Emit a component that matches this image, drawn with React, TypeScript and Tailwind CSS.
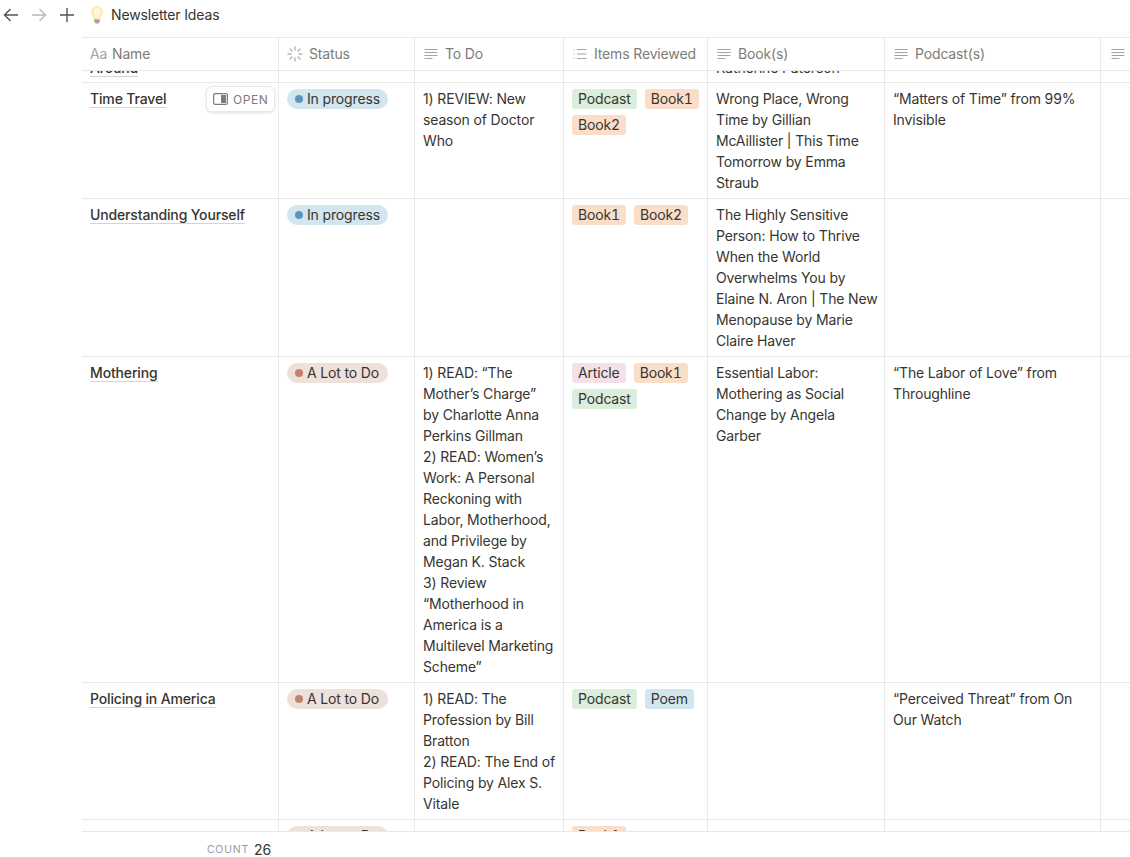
import type { ReactNode } from 'react';

type TagName = 'Podcast' | 'Book1' | 'Book2' | 'Article' | 'Poem';
type Status = 'In progress' | 'A Lot to Do';

type RowData = {
  name: string;
  status: Status;
  todo: string[];
  tags: TagName[];
  books: string;
  podcasts: string;
  hovered?: boolean;
};

const tagColors: Record<TagName, string> = {
  Podcast: 'bg-[#dbeddb]',
  Book1: 'bg-[#fadec9]',
  Book2: 'bg-[#fadec9]',
  Article: 'bg-[#f5e0e9]',
  Poem: 'bg-[#d3e5ef]',
};

const rows: RowData[] = [
  {
    name: 'Time Travel',
    status: 'In progress',
    todo: ['1) REVIEW: New season of Doctor Who'],
    tags: ['Podcast', 'Book1', 'Book2'],
    books:
      'Wrong Place, Wrong Time by Gillian McAillister | This Time Tomorrow by Emma Straub',
    podcasts: '“Matters of Time” from 99% Invisible',
    hovered: true,
  },
  {
    name: 'Understanding Yourself',
    status: 'In progress',
    todo: [],
    tags: ['Book1', 'Book2'],
    books:
      'The Highly Sensitive Person: How to Thrive When the World Overwhelms You by Elaine N. Aron | The New Menopause by Marie Claire Haver',
    podcasts: '',
  },
  {
    name: 'Mothering',
    status: 'A Lot to Do',
    todo: [
      '1) READ: “The Mother’s Charge” by Charlotte Anna Perkins Gillman',
      '2) READ: Women’s Work: A Personal Reckoning with Labor, Motherhood, and Privilege by Megan K. Stack',
      '3) Review “Motherhood in America is a Multilevel Marketing Scheme”',
    ],
    tags: ['Article', 'Book1', 'Podcast'],
    books: 'Essential Labor: Mothering as Social Change by Angela Garber',
    podcasts: '“The Labor of Love” from Throughline',
  },
  {
    name: 'Policing in America',
    status: 'A Lot to Do',
    todo: [
      '1) READ: The Profession by Bill Bratton',
      '2) READ: The End of Policing by Alex S. Vitale',
    ],
    tags: ['Podcast', 'Poem'],
    books: '',
    podcasts: '“Perceived Threat” from On Our Watch',
  },
];

function TextIcon() {
  return (
    <svg width="16" height="16" viewBox="0 0 16 16" fill="none" stroke="#a5a4a1" strokeWidth="1.1" className="shrink-0">
      <path d="M1.5 3.5h13M1.5 6.5h13M1.5 9.5h13M1.5 12.5h8" />
    </svg>
  );
}

function ListIcon() {
  return (
    <svg width="16" height="16" viewBox="0 0 16 16" fill="none" stroke="#a5a4a1" strokeWidth="1.1" className="shrink-0">
      <path d="M1.5 3.5h1M1.5 8h1M1.5 12.5h1M5 3.5h9.5M5 8h9.5M5 12.5h9.5" />
    </svg>
  );
}

function SpinnerIcon() {
  return (
    <svg width="16" height="16" viewBox="0 0 16 16" fill="none" stroke="#b3b2af" strokeWidth="1.4" strokeLinecap="round" className="shrink-0">
      <path d="M8 1v3M8 12v3M1 8h3M12 8h3M3 3l2 2M11 11l2 2M3 13l2-2M11 5l2-2" />
    </svg>
  );
}

function BulbIcon() {
  return (
    <svg width="14" height="20" viewBox="0 0 14 20" className="shrink-0">
      <path d="M7 1C3.6 1 1 3.5 1 6.8c0 2.7 2.2 4.3 2.8 7.2h6.4c.6-2.9 2.8-4.5 2.8-7.2C13 3.5 10.4 1 7 1z" fill="#fdeeb0" />
      <path d="M7 3c-2 0-3.6 1.6-3.6 3.8 0 1.9 1.6 3.4 2.2 6h2.8c.6-2.6 2.2-4.1 2.2-6C10.6 4.6 9 3 7 3z" fill="#fff8dc" />
      <path d="M4.2 14.2h5.6v2.6l-1.6 1.8H5.8l-1.6-1.8z" fill="#a8a396" />
    </svg>
  );
}

function Cell({ width, children }: { width: string; children?: ReactNode }) {
  return <div className={`${width} shrink-0 border-r border-[#e9e9e7] pl-2 pr-[6px] py-[5px]`}>{children}</div>;
}

function HeaderCell({ width, icon, label }: { width: string; icon: ReactNode; label?: string }) {
  return (
    <div className={`${width} shrink-0 border-r border-[#e9e9e7] pl-2 pb-[1px] flex items-center gap-[6px] text-[#7d7c78]`}>
      {icon}
      {label && <span>{label}</span>}
    </div>
  );
}

function StatusPill({ status }: { status: Status }) {
  const inProgress = status === 'In progress';
  return (
    <div
      className={`flex h-5 w-[101px] items-center gap-1 rounded-full pl-[8px] leading-5 ${
        inProgress ? 'bg-[#d3e5ef]' : 'bg-[#eee0da]'
      }`}
    >
      <span className={`size-2 rounded-full ${inProgress ? 'bg-[#5b97bd]' : 'bg-[#c4826d]'}`} />
      <span className="text-[#37352f]">{status}</span>
    </div>
  );
}

function Tag({ name }: { name: TagName }) {
  return (
    <span className={`flex h-5 items-center rounded-[3px] px-[6px] leading-5 tabular-nums ${tagColors[name]}`}>
      {name}
    </span>
  );
}

function RowControls() {
  return (
    <div className="absolute left-[-82px] top-0 flex h-[32px] items-center">
      <svg width="16" height="16" viewBox="0 0 16 16" fill="none" stroke="#b9b8b5" strokeWidth="1.3" className="ml-[11px]">
        <path d="M8 1.5v13M1.5 8h13" />
      </svg>
      <svg width="12" height="16" viewBox="0 0 12 16" fill="#b9b8b5" className="ml-[8px]">
        <circle cx="3" cy="3" r="1.3" />
        <circle cx="9" cy="3" r="1.3" />
        <circle cx="3" cy="8" r="1.3" />
        <circle cx="9" cy="8" r="1.3" />
        <circle cx="3" cy="13" r="1.3" />
        <circle cx="9" cy="13" r="1.3" />
      </svg>
      <div className="ml-[11px] size-[14px] rounded-[2px] border border-[#c9c8c5] bg-white" />
    </div>
  );
}

function OpenButton() {
  return (
    <div className="absolute left-[124px] top-[3px] flex h-[26px] w-[69px] items-center gap-[5px] rounded-[6px] border border-[#e9e9e7] bg-white pl-[6px] text-[12px] tracking-[0.6px] text-[#7d7c78] shadow-[0_1px_3px_rgba(15,15,15,0.12)]">
      <svg width="15" height="12" viewBox="0 0 15 12" fill="none" className="shrink-0">
        <rect x="0.6" y="0.6" width="13.8" height="10.8" rx="1.6" stroke="#7d7c78" strokeWidth="1.2" />
        <rect x="8" y="2" width="5" height="8" fill="#7d7c78" />
      </svg>
      <span>OPEN</span>
    </div>
  );
}

function TableRow({ row }: { row: RowData }) {
  return (
    <div className="relative flex border-b border-[#e9e9e7]">
      {row.hovered && <RowControls />}
      {row.hovered && <OpenButton />}
      <Cell width="w-[197px]">
        <span className="border-b border-[#d5d4d2] font-medium">{row.name}</span>
      </Cell>
      <Cell width="w-[136px]">
        <div className="pt-[1px]">
          <StatusPill status={row.status} />
        </div>
      </Cell>
      <Cell width="w-[149px]">
        <div className="pr-[1.5px]">
          {row.todo.map((line) => (
            <div key={line}>{line}</div>
          ))}
        </div>
      </Cell>
      <Cell width="w-[144px]">
        <div className="flex flex-wrap gap-x-2 gap-y-[6px] pt-[1px]">
          {row.tags.map((tag) => (
            <Tag key={tag} name={tag} />
          ))}
        </div>
      </Cell>
      <Cell width="w-[177px]">{row.books}</Cell>
      <Cell width="w-[216px]">{row.podcasts}</Cell>
      <div className="flex-1" />
    </div>
  );
}

// row scrolled away under the header, only its last line shows
function TopClippedRow() {
  const cols = ['w-[197px]', 'w-[136px]', 'w-[149px]', 'w-[144px]', 'w-[177px]', 'w-[216px]'];
  return (
    <div className="flex h-[12px] overflow-hidden border-b border-[#e9e9e7]">
      {cols.map((w, i) => (
        <div key={w} className={`${w} shrink-0 border-r border-[#e9e9e7] pl-2 flex flex-col justify-end pb-[4px]`}>
          {i === 0 && (
            <div className="shrink-0">
              <span className="border-b border-[#d5d4d2] font-medium">Around</span>
            </div>
          )}
          {i === 4 && <div className="shrink-0">Katherine Paterson</div>}
        </div>
      ))}
    </div>
  );
}

// next row, cut off by the footer
function BottomClippedRow() {
  return (
    <div className="flex h-[11px] overflow-hidden">
      <Cell width="w-[197px]" />
      <Cell width="w-[136px]">
        <div className="pt-[1px]">
          <StatusPill status="A Lot to Do" />
        </div>
      </Cell>
      <Cell width="w-[149px]">
        <div className="pt-[1px]">1) READ: Hidden Gems</div>
      </Cell>
      <Cell width="w-[144px]">
        <div className="flex pt-[1px]">
          <Tag name="Book1" />
        </div>
      </Cell>
      <Cell width="w-[177px]">
        <div className="pt-[1px]">Untitled by Oliver Kite</div>
      </Cell>
      <Cell width="w-[216px]" />
    </div>
  );
}

export default function App() {
  return (
    <div className="flex h-[857px] w-[1130px] flex-col overflow-hidden bg-white font-['Inter',sans-serif] text-[14px] leading-[21px] tracking-[-0.15px] text-[#37352f]">
      <div className="flex h-[37px] shrink-0 items-center pb-[8px]">
        <svg width="16" height="16" viewBox="0 0 16 16" fill="none" stroke="#55534e" strokeWidth="1.4" className="ml-[3px]">
          <path d="M15 8H1.5M7.5 2L1.5 8l6 6" />
        </svg>
        <svg width="16" height="16" viewBox="0 0 16 16" fill="none" stroke="#b9b8b5" strokeWidth="1.4" className="ml-[12px]">
          <path d="M1 8h13.5M8.5 2l6 6-6 6" />
        </svg>
        <svg width="16" height="16" viewBox="0 0 16 16" fill="none" stroke="#55534e" strokeWidth="1.4" className="ml-[12px]">
          <path d="M8 1v14M1 8h14" />
        </svg>
        <div className="ml-[15px]">
          <BulbIcon />
        </div>
        <span className="ml-[7px]">Newsletter Ideas</span>
      </div>

      <div className="ml-[82px] flex h-[34px] shrink-0 border-y border-[#e9e9e7]">
        <HeaderCell
          width="w-[197px]"
          icon={<span className="w-4 text-[#a5a4a1]">Aa</span>}
          label="Name"
        />
        <HeaderCell width="w-[136px]" icon={<SpinnerIcon />} label="Status" />
        <HeaderCell width="w-[149px]" icon={<TextIcon />} label="To Do" />
        <HeaderCell width="w-[144px]" icon={<ListIcon />} label="Items Reviewed" />
        <HeaderCell width="w-[177px]" icon={<TextIcon />} label="Book(s)" />
        <HeaderCell width="w-[216px]" icon={<TextIcon />} label="Podcast(s)" />
        <div className="flex-1 pl-[9px] pb-[1px] flex items-center">
          <TextIcon />
        </div>
      </div>

      <div className="ml-[82px] h-[761px] shrink-0 overflow-hidden border-b border-[#e9e9e7]">
        <TopClippedRow />
        {rows.map((row) => (
          <TableRow key={row.name} row={row} />
        ))}
        <BottomClippedRow />
      </div>

      <div className="ml-[82px] flex w-[197px] flex-1 items-center justify-end gap-[5px] pr-2 pt-[7px]">
        <span className="text-[10.5px] tracking-[0.8px] text-[#9b9a97]">COUNT</span>
        <span>26</span>
      </div>
    </div>
  );
}
